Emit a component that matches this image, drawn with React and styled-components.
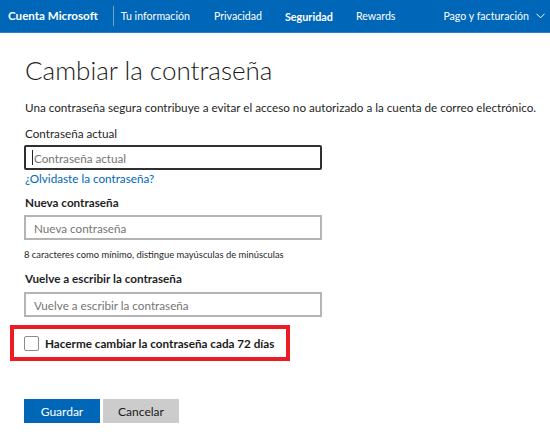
import React from "react";
import styled, { createGlobalStyle } from "styled-components";

const GlobalStyle = createGlobalStyle`
  html, body {
    margin: 0;
    padding: 0;
    background: #fff;
  }
  body {
    font-family: Lato, "Liberation Sans", sans-serif;
    color: #1f1f1f;
  }
`;

const blue = "#0067b8";
const textSize = "11.7px";

const Header = styled.header`
  height: 32px;
  background: ${blue};
  border-bottom: 1px solid #2b7fc4;
  display: flex;
  align-items: center;
  padding-left: 8px;
  white-space: nowrap;
  overflow: hidden;
`;

const Brand = styled.span`
  color: #fff;
  font-size: 11.6px;
  font-weight: 700;
  padding-right: 15px;
  border-right: 1px solid #6fa6d6;
  line-height: 20px;
`;

const NavItem = styled.span`
  color: #fff;
  font-size: ${p => (p.active ? "10.8px" : "10.6px")};
  font-weight: ${p => (p.active ? 700 : 400)};
  margin-left: ${p => p.gap || 23}px;
  display: flex;
  align-items: center;
  gap: 7px;
`;

const Main = styled.main`
  padding: 0 0 0 24px;
`;

const Title = styled.h1`
  margin: 19px 0 0 1px;
  font-size: 26px;
  font-weight: 300;
  line-height: 36px;
  color: #1a1a1a;
`;

const Intro = styled.p`
  margin: 10px 0 0 1px;
  font-size: ${textSize};
  line-height: 18px;
  white-space: nowrap;
`;

const Label = styled.div`
  margin-top: ${p => p.mt || 8}px;
  margin-left: 1px;
  font-size: ${textSize};
  line-height: 18px;
  font-weight: ${p => (p.strong ? 700 : 400)};
`;

const Field = styled.div`
  position: relative;
  margin-top: ${p => p.mt || 4}px;
  width: 298px;
`;

const Input = styled.input`
  box-sizing: border-box;
  display: block;
  width: 100%;
  height: 25px;
  padding: 0 8px;
  font-family: inherit;
  font-size: ${textSize};
  color: #222;
  border: ${p => (p.focused ? "2px solid #2f2f2f" : "2px solid #b4b4b4")};
  border-radius: ${p => (p.focused ? "2px" : "0")};
  outline: none;
  background: #fff;
  &::placeholder {
    color: #757575;
  }
`;

const Caret = styled.span`
  position: absolute;
  left: 8px;
  top: 5px;
  width: 1px;
  height: 15px;
  background: #222;
`;

const Link = styled.a`
  display: block;
  margin: 0 0 0 1px;
  font-size: ${textSize};
  line-height: 16px;
  color: ${blue};
  text-decoration: none;
`;

const Hint = styled.div`
  margin-top: 8px;
  font-size: 9.4px;
  line-height: 14px;
`;

const Highlight = styled.div`
  margin: 8px 0 0 -14px;
  width: 280px;
  height: 36px;
  box-sizing: border-box;
  border: 4px solid #ed1c24;
  display: flex;
  align-items: center;
  padding-left: 10px;
  gap: 6px;
  white-space: nowrap;
`;

const Box = styled.span`
  width: 15px;
  height: 15px;
  box-sizing: border-box;
  border: 1.5px solid #8c8c8c;
  border-radius: 2px;
  background: #fff;
  flex: none;
`;

const CheckText = styled.span`
  font-size: ${textSize};
  font-weight: 700;
  color: #1a1a1a;
`;

const Actions = styled.div`
  display: flex;
  gap: 3px;
  margin-top: 38px;
`;

const Button = styled.button`
  width: 76px;
  height: 24px;
  border: none;
  font-family: inherit;
  font-size: 12px;
  background: ${p => (p.primary ? blue : "#cccccc")};
  color: ${p => (p.primary ? "#fff" : "#1a1a1a")};
  padding: 0;
`;

const Chevron = () => (
  <svg width="9" height="6" viewBox="0 0 9 6" fill="none">
    <path d="M0.5 0.8 L4.5 4.8 L8.5 0.8" stroke="#fff" strokeWidth="1" />
  </svg>
);

export default function App() {
  return (
    <>
      <GlobalStyle />
      <Header>
        <Brand>Cuenta Microsoft</Brand>
        <NavItem gap={7}>Tu información</NavItem>
        <NavItem gap={24}>Privacidad</NavItem>
        <NavItem active>Seguridad</NavItem>
        <NavItem>Rewards</NavItem>
        <NavItem gap={48}>
          Pago y facturación <Chevron />
        </NavItem>
      </Header>
      <Main>
        <Title>Cambiar la contraseña</Title>
        <Intro>
          Una contraseña segura contribuye a evitar el acceso no autorizado a la cuenta de correo electrónico.
        </Intro>
        <Label mt={8}>Contraseña actual</Label>
        <Field mt={3}>
          <Input focused placeholder="Contraseña actual" type="password" />
          <Caret />
        </Field>
        <Link href="#">¿Olvidaste la contraseña?</Link>
        <Label strong mt={7}>Nueva contraseña</Label>
        <Field mt={4}>
          <Input placeholder="Nueva contraseña" type="password" />
        </Field>
        <Hint>8 caracteres como mínimo, distingue mayúsculas de minúsculas</Hint>
        <Label strong mt={7}>Vuelve a escribir la contraseña</Label>
        <Field mt={5}>
          <Input placeholder="Vuelve a escribir la contraseña" type="password" />
        </Field>
        <Highlight>
          <Box />
          <CheckText>Hacerme cambiar la contraseña cada 72 días</CheckText>
        </Highlight>
        <Actions>
          <Button primary>Guardar</Button>
          <Button>Cancelar</Button>
        </Actions>
      </Main>
    </>
  );
}
